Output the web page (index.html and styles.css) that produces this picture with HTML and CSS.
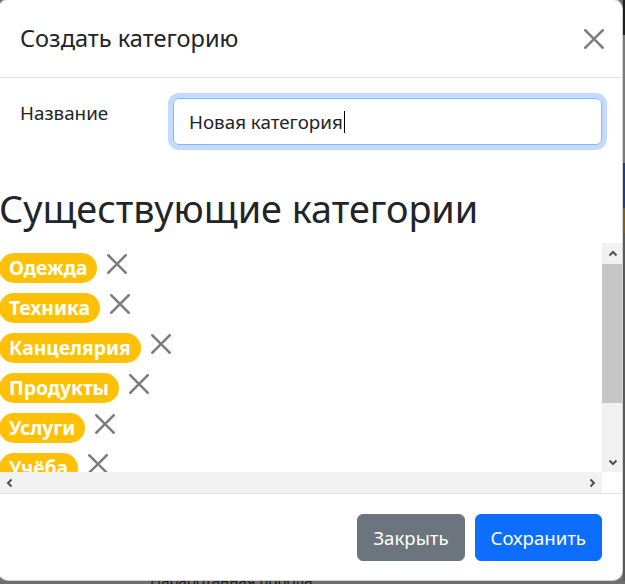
FILE: index.html
```html
<!DOCTYPE html>
<html lang="ru">
<head>
<meta charset="utf-8">
<title>Создать категорию</title>
<link rel="stylesheet" href="styles.css">
</head>
<body>
<div class="screen">
  <div class="modal">
    <div class="modal-header">
      <h5 class="modal-title">Создать категорию</h5>
      <button class="btn-close header-close" aria-label="Закрыть">
        <svg viewBox="0 0 16 16" class="x-icon"><path d="M.293.293a1 1 0 0 1 1.414 0L8 6.586 14.293.293a1 1 0 1 1 1.414 1.414L9.414 8l6.293 6.293a1 1 0 0 1-1.414 1.414L8 9.414l-6.293 6.293a1 1 0 0 1-1.414-1.414L6.586 8 .293 1.707a1 1 0 0 1 0-1.414z"/></svg>
      </button>
    </div>
    <div class="modal-body">
      <div class="form-row">
        <label class="form-label">Название</label>
        <div class="form-control">Новая категория<span class="caret"></span></div>
      </div>
    </div>
    <h2 class="section-title">Существующие категории</h2>
    <div class="scroll">
      <div class="scroll-content">
        <div class="cat-row"><span class="badge">Одежда</span><button class="btn-close cat-close" aria-label="Удалить"><svg viewBox="0 0 16 16" class="x-icon"><path d="M.293.293a1 1 0 0 1 1.414 0L8 6.586 14.293.293a1 1 0 1 1 1.414 1.414L9.414 8l6.293 6.293a1 1 0 0 1-1.414 1.414L8 9.414l-6.293 6.293a1 1 0 0 1-1.414-1.414L6.586 8 .293 1.707a1 1 0 0 1 0-1.414z"/></svg></button></div>
        <div class="cat-row"><span class="badge">Техника</span><button class="btn-close cat-close" aria-label="Удалить"><svg viewBox="0 0 16 16" class="x-icon"><path d="M.293.293a1 1 0 0 1 1.414 0L8 6.586 14.293.293a1 1 0 1 1 1.414 1.414L9.414 8l6.293 6.293a1 1 0 0 1-1.414 1.414L8 9.414l-6.293 6.293a1 1 0 0 1-1.414-1.414L6.586 8 .293 1.707a1 1 0 0 1 0-1.414z"/></svg></button></div>
        <div class="cat-row"><span class="badge">Канцелярия</span><button class="btn-close cat-close" aria-label="Удалить"><svg viewBox="0 0 16 16" class="x-icon"><path d="M.293.293a1 1 0 0 1 1.414 0L8 6.586 14.293.293a1 1 0 1 1 1.414 1.414L9.414 8l6.293 6.293a1 1 0 0 1-1.414 1.414L8 9.414l-6.293 6.293a1 1 0 0 1-1.414-1.414L6.586 8 .293 1.707a1 1 0 0 1 0-1.414z"/></svg></button></div>
        <div class="cat-row"><span class="badge">Продукты</span><button class="btn-close cat-close" aria-label="Удалить"><svg viewBox="0 0 16 16" class="x-icon"><path d="M.293.293a1 1 0 0 1 1.414 0L8 6.586 14.293.293a1 1 0 1 1 1.414 1.414L9.414 8l6.293 6.293a1 1 0 0 1-1.414 1.414L8 9.414l-6.293 6.293a1 1 0 0 1-1.414-1.414L6.586 8 .293 1.707a1 1 0 0 1 0-1.414z"/></svg></button></div>
        <div class="cat-row"><span class="badge">Услуги</span><button class="btn-close cat-close" aria-label="Удалить"><svg viewBox="0 0 16 16" class="x-icon"><path d="M.293.293a1 1 0 0 1 1.414 0L8 6.586 14.293.293a1 1 0 1 1 1.414 1.414L9.414 8l6.293 6.293a1 1 0 0 1-1.414 1.414L8 9.414l-6.293 6.293a1 1 0 0 1-1.414-1.414L6.586 8 .293 1.707a1 1 0 0 1 0-1.414z"/></svg></button></div>
        <div class="cat-row"><span class="badge">Учёба</span><button class="btn-close cat-close" aria-label="Удалить"><svg viewBox="0 0 16 16" class="x-icon"><path d="M.293.293a1 1 0 0 1 1.414 0L8 6.586 14.293.293a1 1 0 1 1 1.414 1.414L9.414 8l6.293 6.293a1 1 0 0 1-1.414 1.414L8 9.414l-6.293 6.293a1 1 0 0 1-1.414-1.414L6.586 8 .293 1.707a1 1 0 0 1 0-1.414z"/></svg></button></div>
      </div>
      <div class="vbar">
        <div class="sb-btn"><svg viewBox="0 0 10 10" class="chev"><polyline points="1.5,6.5 5,3 8.5,6.5"/></svg></div>
        <div class="vthumb"></div>
        <div class="sb-track"></div>
        <div class="sb-btn"><svg viewBox="0 0 10 10" class="chev"><polyline points="1.5,3.5 5,7 8.5,3.5"/></svg></div>
      </div>
      <div class="hbar">
        <div class="sb-btn"><svg viewBox="0 0 10 10" class="chev"><polyline points="6.5,1.5 3,5 6.5,8.5"/></svg></div>
        <div class="sb-track"></div>
        <div class="sb-btn"><svg viewBox="0 0 10 10" class="chev"><polyline points="3.5,1.5 7,5 3.5,8.5"/></svg></div>
      </div>
      <div class="corner"></div>
    </div>
    <div class="modal-footer">
      <button class="btn btn-secondary">Закрыть</button>
      <button class="btn btn-primary">Сохранить</button>
    </div>
  </div>
  <div class="strip-right">
    <div class="seg seg-dark"></div>
    <div class="seg seg-gray"></div>
    <div class="seg seg-blue"></div>
    <div class="seg seg-yellow"></div>
    <div class="seg seg-gray2"></div>
  </div>
  <div class="strip-bottom"><span class="under-text">Наработанная порода</span></div>
</div>
</body>
</html>
```

FILE: styles.css
```css
* { box-sizing: border-box; }
html, body {
  margin: 0;
  padding: 0;
  height: 100%;
  overflow: hidden;
}
body {
  font-family: "Noto Sans", "Open Sans", sans-serif;
  font-size: 18.8px;
  line-height: 1.5;
  color: #212529;
  background: #6f6f6f;
}
.screen {
  display: grid;
  grid-template-columns: 623px 1fr;
  grid-template-rows: 581px 1fr;
  height: 100vh;
}
.modal {
  grid-column: 1;
  grid-row: 1;
  width: 625px;
  margin: -1px 0 0 -2px;
  background: #fff;
  border: 1px solid rgba(0,0,0,.175);
  border-radius: 10px;
  display: flex;
  flex-direction: column;
  overflow: hidden;
  align-self: start;
}
.modal-header {
  display: flex;
  align-items: center;
  padding: 20px 20px 20px 21px;
  border-bottom: 1px solid #dee2e6;
  height: 78px;
}
.modal-title {
  margin: 0;
  font-size: 23.6px;
  font-weight: 400;
  line-height: 37px;
  flex: 1;
}
.btn-close {
  border: 0;
  background: transparent;
  padding: 0;
  display: flex;
  align-items: center;
  justify-content: center;
  width: 30px;
  height: 30px;
  cursor: pointer;
}
.x-icon {
  width: 20px;
  height: 20px;
  fill: #000;
  opacity: .5;
}
.header-close {
  margin-right: -7px;
}
.modal-body {
  padding: 20px 20px 20px 21px;
}
.form-row {
  display: grid;
  grid-template-columns: 153px 1fr;
  align-items: start;
}
.form-label {
  line-height: 30px;
}
.form-control {
  height: 47px;
  border: 1px solid #86b7fe;
  border-radius: 6px;
  box-shadow: 0 0 0 5px rgba(13,110,253,.25);
  padding: 7px 15px;
  line-height: 30px;
  display: flex;
  align-items: center;
}
.caret {
  display: inline-block;
  width: 1px;
  height: 22px;
  background: #000;
  margin-left: 1px;
}
.section-title {
  margin: 20px 0 10px;
  font-size: 37.8px;
  font-weight: 400;
  line-height: 48px;
  padding-left: 0;
}
.scroll {
  height: 250px;
  display: grid;
  grid-template-columns: 1fr 21px;
  grid-template-rows: 1fr 21px;
  margin-right: -1px;
}
.scroll-content {
  overflow: hidden;
  padding-top: 10px;
}
.cat-row {
  display: flex;
  align-items: flex-start;
  height: 40px;
}
.badge {
  display: inline-block;
  background: #ffc107;
  color: #fff;
  font-weight: 700;
  font-size: 19.3px;
  line-height: 18px;
  padding: 6px 10px;
  border-radius: 15px;
  white-space: nowrap;
}
.cat-close {
  margin: -4px 0 0 5px;
}
.vbar {
  background: #f1f1f1;
  display: flex;
  flex-direction: column;
}
.hbar {
  background: #f1f1f1;
  display: flex;
}
.sb-btn {
  width: 21px;
  height: 21px;
  flex: none;
  display: flex;
  align-items: center;
  justify-content: center;
}
.chev {
  width: 10px;
  height: 10px;
  fill: none;
  stroke: #505050;
  stroke-width: 2;
}
.vthumb {
  height: 139px;
  background: #c6c6c6;
  flex: none;
}
.sb-track { flex: 1; }
.corner { background: #fff; }
.modal-footer {
  border-top: 1px solid #dee2e6;
  padding: 15px 15px 14px;
  display: flex;
  justify-content: flex-end;
}
.btn {
  margin: 5px;
  font-family: inherit;
  font-size: 18.6px;
  line-height: 30px;
  padding: 7px 15px;
  border-radius: 6px;
  border: 1px solid transparent;
  color: #fff;
  height: 47px;
}
.btn-secondary { background: #6c757d; border-color: #6c757d; }
.btn-primary { background: #0d6efd; border-color: #0d6efd; }
.strip-right {
  grid-column: 2;
  grid-row: 1;
  display: flex;
  flex-direction: column;
}
.seg-dark { height: 35px; background: #1e1e1e; }
.seg-gray { height: 128px; background: #7a7a7a; }
.seg-blue { height: 45px; background: #1f3d80; }
.seg-yellow { height: 25px; background: #80600e; }
.seg-gray2 { flex: 1; background: #5a5a5a; }
.strip-bottom {
  grid-column: 1 / 3;
  grid-row: 2;
  background: #6f6f6f;
  overflow: hidden;
  padding-left: 150px;
}
.under-text {
  display: block;
  margin-top: -9px;
  font-size: 15px;
  line-height: 16px;
  color: #1a1a1a;
}
```
